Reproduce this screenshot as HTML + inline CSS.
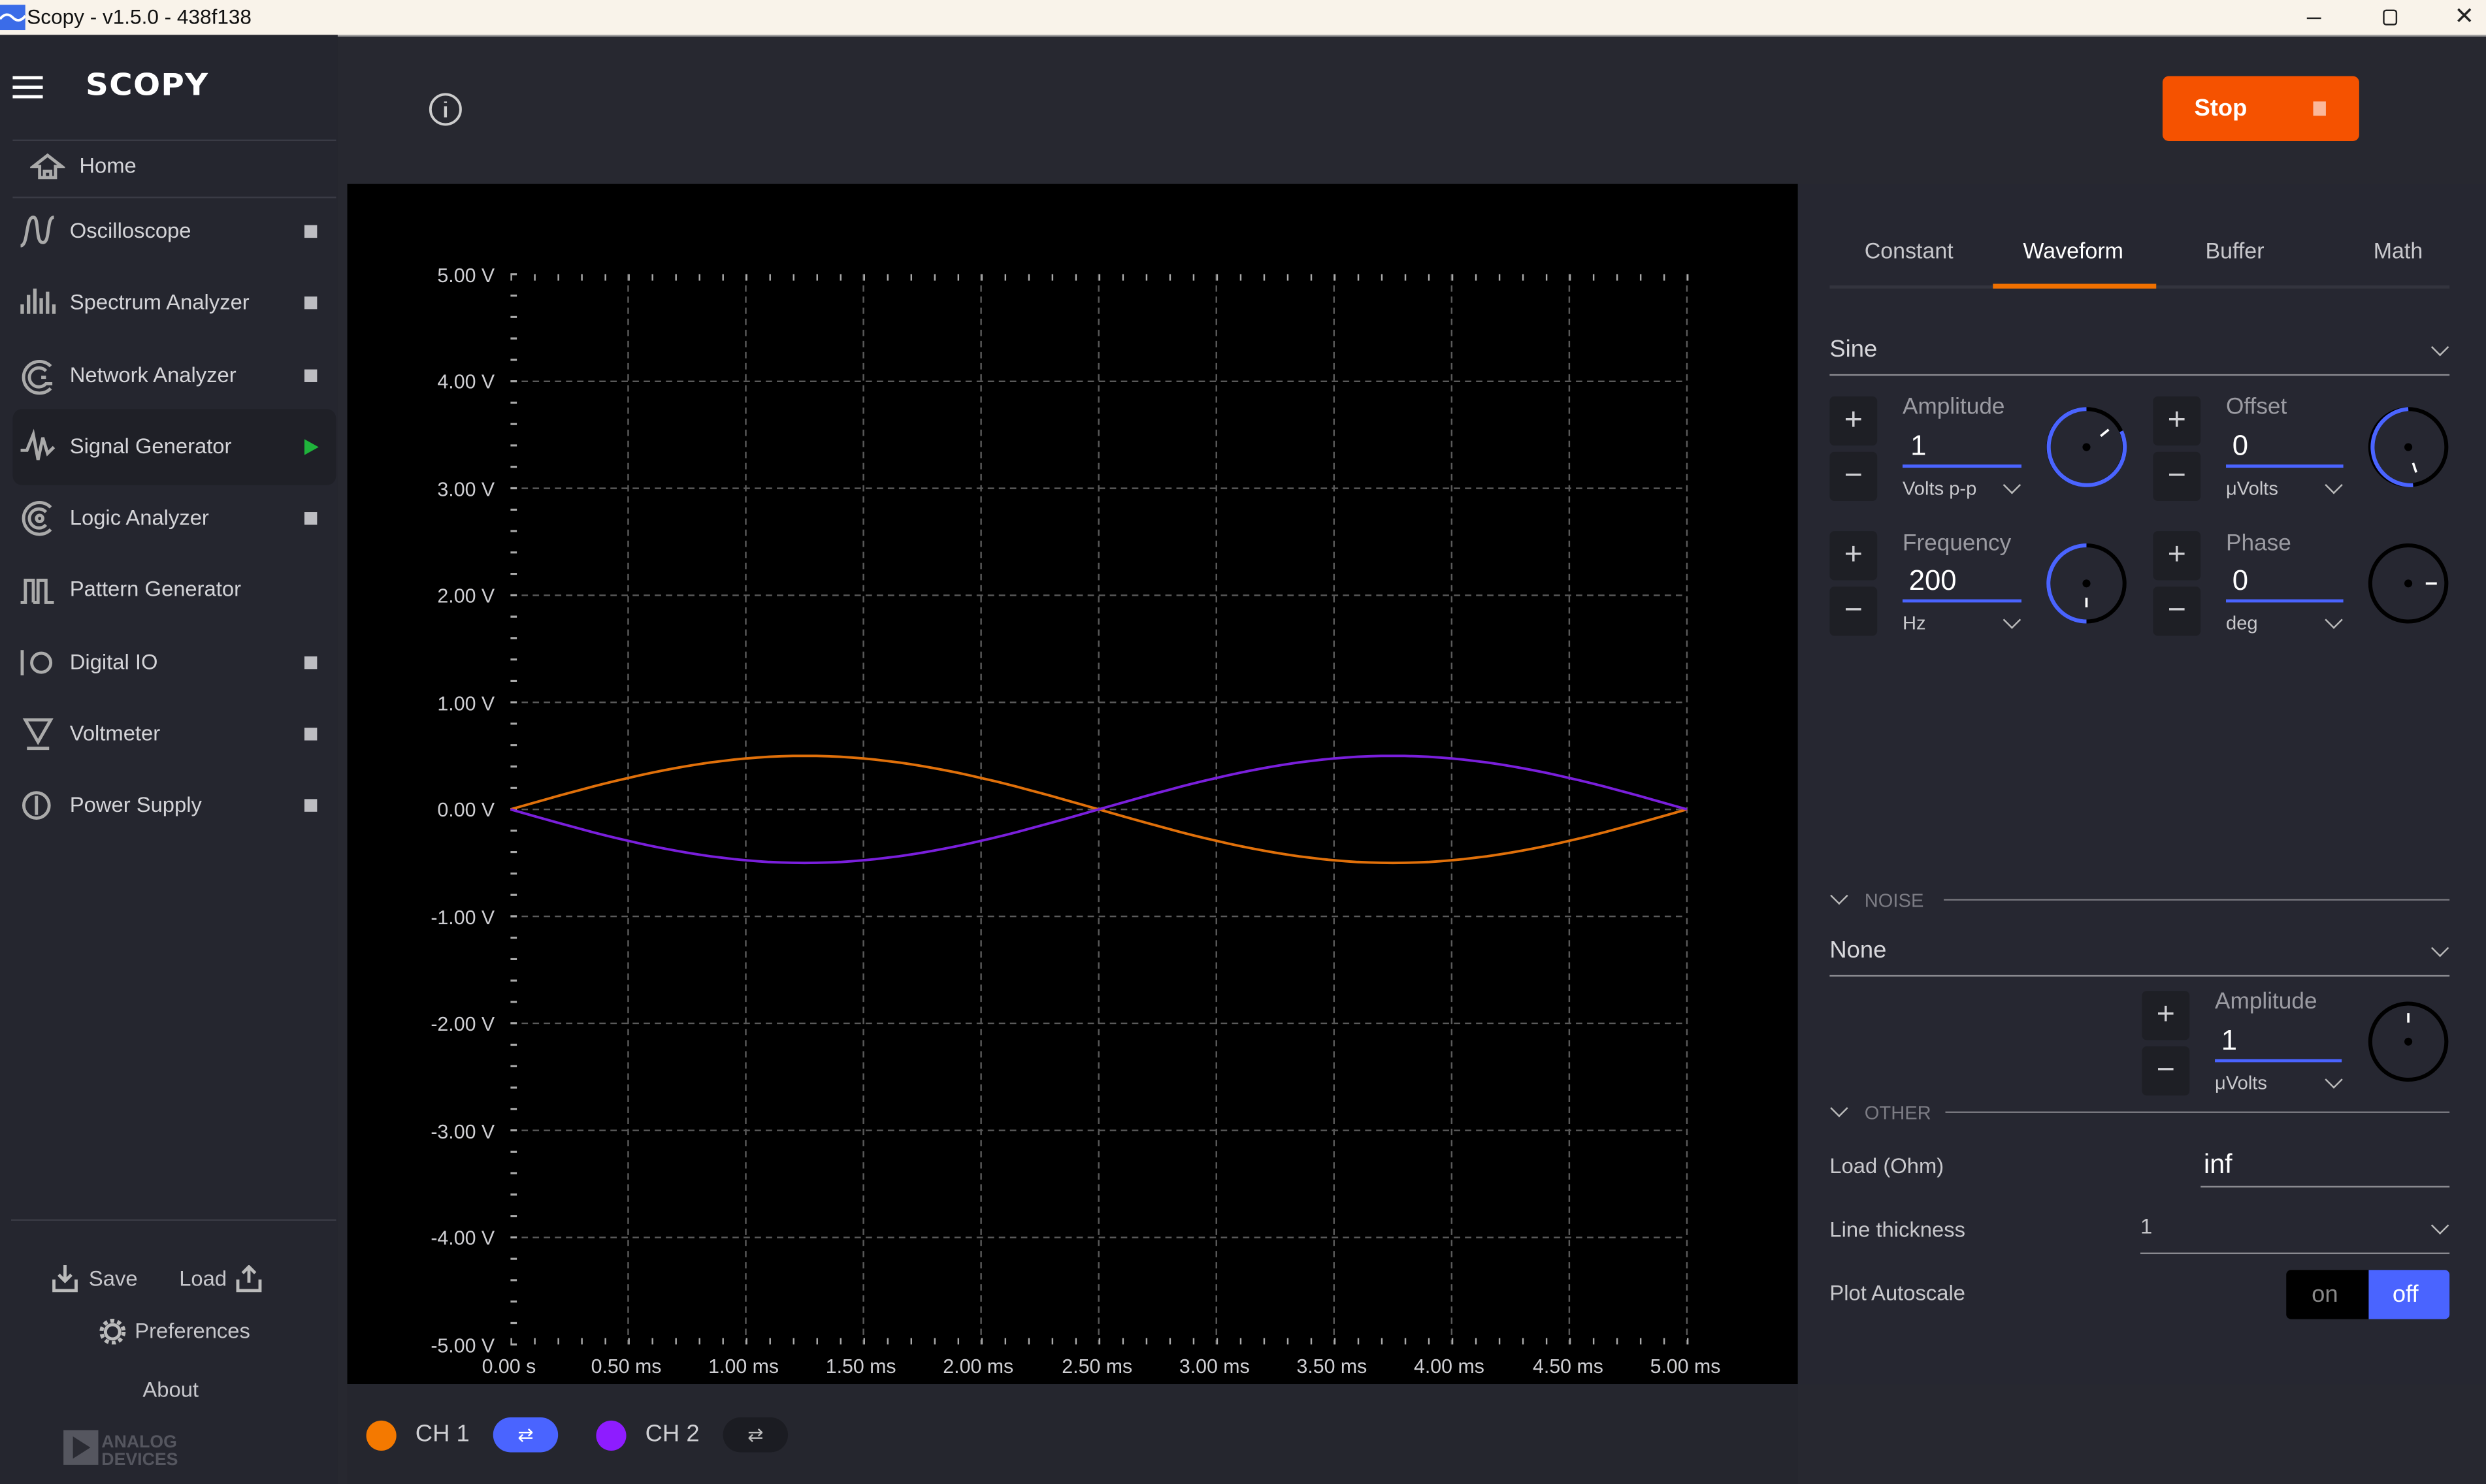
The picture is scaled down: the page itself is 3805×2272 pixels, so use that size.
<!DOCTYPE html>
<html><head><meta charset="utf-8"><style>
html,body{margin:0;padding:0;background:#26272f;overflow:hidden;width:3805px;height:2272px}
#s{position:absolute;left:0;top:0;width:1568px;height:936px;transform:scale(2.42666,2.42735);transform-origin:0 0;font-family:"Liberation Sans","DejaVu Sans",sans-serif;color:#d0d0d4;background:#272830}
.a{position:absolute}
.t{white-space:nowrap}
.side{left:0;top:22px;width:213px;height:914px;background:#25262f}
.item{position:absolute;left:44px;font-size:13.5px;color:#d4d4d8}
.sq{position:absolute;left:192px;width:8px;height:8px;background:#bdbdc2}
.pm{position:absolute;width:30px;height:31px;background:#1e1f25;border-radius:3px;color:#cfcfd3;font-size:20px;text-align:center;line-height:30px}
.lbl{font-size:14.5px;color:#9b9ba2}
.val{font-size:18px;color:#fff}
.uline{height:2px;background:#4a64ff}
.unit{font-size:12px;color:#c8c8cc}
.chev{width:7px;height:7px;border-right:1.3px solid #bbb;border-bottom:1.3px solid #bbb;transform:rotate(45deg)}
</style></head><body><div id="s">
<!-- title bar -->
<div class="a" style="left:0;top:0;width:1568px;height:22px;background:#f9f3ea;border-bottom:1px solid #999"></div>
<svg class="a" style="left:0;top:3px" width="16" height="16"><rect width="16" height="16" fill="#3b6ce8"/><path d="M0 9 Q4 4 8 8 T16 7" stroke="#fff" stroke-width="1.6" fill="none"/></svg>
<div class="a t" style="left:17px;top:3px;font-size:13px;color:#111">Scopy - v1.5.0 - 438f138</div>
<div class="a" style="left:1455px;top:11px;width:9px;height:1px;background:#222"></div>
<div class="a" style="left:1503px;top:6px;width:7px;height:8px;border:1px solid #222;border-radius:2px"></div>
<div class="a t" style="left:1548px;top:1px;font-size:15px;color:#222">✕</div>

<!-- sidebar -->
<div class="a side"></div>
<div class="a" style="left:8px;top:48px;width:19px;height:2px;background:#fff;box-shadow:0 6px 0 #fff,0 12px 0 #fff"></div>
<div class="a t" style="left:54px;top:43px;font-size:19px;font-weight:bold;color:#fff;letter-spacing:0.5px;transform:scaleX(1.05);transform-origin:0 0;font-family:'DejaVu Sans',sans-serif">SCOPY</div>
<div class="a" style="left:8px;top:88px;width:204px;height:1px;background:#3a3b45"></div>
<div class="a" style="left:8px;top:124px;width:204px;height:1px;background:#3a3b45"></div>
<svg class="a" style="left:19px;top:96px" width="22" height="18"><path d="M2 9 L11 2 L20 9 H16 V16 H6 V9 Z M9 16 V12 H13 V16" stroke="#aaa" stroke-width="2" fill="none"/></svg>
<div class="item t" style="left:50px;top:97px">Home</div>
<div class="a" style="left:8px;top:258px;width:204px;height:48px;background:#1f2027;border-radius:6px"></div>
<svg class="a" style="left:12px;top:134px" width="24" height="400" fill="none" stroke="#aaa" stroke-width="2">
<path d="M1 21 C6 21 4 3 9 3 C13 3 10 19 15 19 C20 19 17 3 22 3"/>
<path d="M2 64 V58 M6 64 V52 M10 64 V48 M14 64 V54 M18 64 V50 M22 64 V58" stroke-width="2.2"/>
<path d="M20 97 A10 10 0 1 0 20 111 M17 100 A6 6 0 1 0 17 108 H21 M14 104 H17"/>
<path d="M1 150 L5 150 L9 140 L12 156 L15 142 L18 152 L22 148"/>
<path d="M20 186 A10 10 0 1 0 20 200 M17 189 A6 6 0 1 0 17 197 M11 193 a2 2 0 1 0 4 0 a2 2 0 1 0 -4 0"/>
<path d="M1 246 H4 V232 H9 V246 M9 246 H12 V232 H17 V246 H22"/>
<path d="M2 276 V292 M14 284 m-6 0 a6 6 0 1 0 12 0 a6 6 0 1 0 -12 0"/>
<path d="M4 320 H20 L12 334 Z M5 338 H19"/>
<path d="M11 374 m-8 0 a8 8 0 1 0 16 0 a8 8 0 1 0 -16 0 M11 368 V380"/>
</svg>
<div class="item t" style="top:138px">Oscilloscope</div><div class="sq" style="top:142px"></div>
<div class="item t" style="top:183px">Spectrum Analyzer</div><div class="sq" style="top:187px"></div>
<div class="item t" style="top:229px">Network Analyzer</div><div class="sq" style="top:233px"></div>
<div class="item t" style="top:274px">Signal Generator</div>
<div class="a" style="left:192px;top:277px;width:0;height:0;border-left:9px solid #1fb33b;border-top:5px solid transparent;border-bottom:5px solid transparent"></div>
<div class="item t" style="top:319px">Logic Analyzer</div><div class="sq" style="top:323px"></div>
<div class="item t" style="top:364px">Pattern Generator</div>
<div class="item t" style="top:410px">Digital IO</div><div class="sq" style="top:414px"></div>
<div class="item t" style="top:455px">Voltmeter</div><div class="sq" style="top:459px"></div>
<div class="item t" style="top:500px">Power Supply</div><div class="sq" style="top:504px"></div>
<div class="a" style="left:7px;top:769px;width:205px;height:1px;background:#3a3b45"></div>
<svg class="a" style="left:33px;top:798px" width="140" height="50" fill="none" stroke="#bbb" stroke-width="2"><path d="M1 9 V16 H15 V9 M8 0 V10 M4 6 L8 10 L12 6"/><path d="M117 9 V16 H131 V9 M124 11 V1 M120 5 L124 1 L128 5"/>
<circle cx="38" cy="42" r="4.5"/><circle cx="38" cy="42" r="7" stroke-dasharray="2.5 2" stroke-width="2.5"/></svg>
<div class="a t" style="left:56px;top:799px;font-size:13.5px;color:#c6c6cb">Save</div>
<div class="a t" style="left:113px;top:799px;font-size:13.5px;color:#c6c6cb">Load</div>
<div class="a t" style="left:85px;top:832px;font-size:13.5px;color:#c6c6cb">Preferences</div>
<div class="a t" style="left:90px;top:869px;font-size:13.5px;color:#c6c6cb">About</div>
<svg class="a" style="left:40px;top:902px" width="90" height="24"><rect x="0" y="0" width="22" height="22" fill="#55565f"/><path d="M6 4 L17 11 L6 18 Z" fill="#2a2b33"/><text x="24" y="11" font-size="11" font-weight="bold" fill="#55565f" font-family="Liberation Sans Narrow,Liberation Sans,sans-serif">ANALOG</text><text x="24" y="22" font-size="11" font-weight="bold" fill="#55565f" font-family="Liberation Sans Narrow,Liberation Sans,sans-serif">DEVICES</text></svg>

<!-- top bar -->
<svg class="a" style="left:269px;top:57px" width="24" height="24"><circle cx="12" cy="12" r="9.5" stroke="#ccc" stroke-width="1.6" fill="none"/><path d="M12 10 V17 M12 7 V8" stroke="#ccc" stroke-width="1.8"/></svg>
<div class="a" style="left:1364px;top:48px;width:124px;height:41px;background:#f55200;border-radius:4px"></div>
<div class="a t" style="left:1384px;top:60px;font-size:15px;font-weight:bold;color:#fff">Stop</div>
<div class="a" style="left:1459px;top:64px;width:8px;height:9px;background:#fbb89a"></div>

<!-- plot -->
<svg class="a" style="left:219px;top:116px" width="915" height="757" viewBox="219 116 915 757">
<rect x="219" y="116" width="915" height="757" fill="#000"/>
<g stroke="#5a5a5a" stroke-width="1" stroke-dasharray="4 3">
<path d="M396.2 173V848M470.4 173V848M544.6 173V848M618.8 173V848M693 173V848M767.2 173V848M841.4 173V848M915.6 173V848M989.8 173V848M1064 173V848"/>
<path d="M322 240.5H1064M322 308H1064M322 375.5H1064M322 443H1064M322 510.5H1064M322 578H1064M322 645.5H1064M322 713H1064M322 780.5H1064"/>
</g>
<g stroke="#aaa">
<line x1="324" y1="172.3" x2="324" y2="849" stroke-width="4" stroke-dasharray="1.3 12.2"/>
<line x1="322" y1="175" x2="1066" y2="175" stroke-width="4" stroke-dasharray="1 13.84"/>
<line x1="322" y1="846" x2="1066" y2="846" stroke-width="4" stroke-dasharray="1 13.84"/>
</g>
<polyline fill="none" stroke="#e0700a" stroke-width="1.6" points="PTS1"/>
<polyline fill="none" stroke="#7a1fdc" stroke-width="1.6" points="PTS2"/>
<g fill="#cfcfd3" font-size="12.5" text-anchor="end" font-family="Liberation Sans Narrow,Liberation Sans,sans-serif">
<text x="312" y="178">5.00 V</text><text x="312" y="245">4.00 V</text><text x="312" y="313">3.00 V</text><text x="312" y="380">2.00 V</text><text x="312" y="448">1.00 V</text><text x="312" y="515">0.00 V</text><text x="312" y="583">-1.00 V</text><text x="312" y="650">-2.00 V</text><text x="312" y="718">-3.00 V</text><text x="312" y="785">-4.00 V</text><text x="312" y="853">-5.00 V</text>
</g>
<g fill="#cfcfd3" font-size="12.5" text-anchor="middle" font-family="Liberation Sans Narrow,Liberation Sans,sans-serif">
<text x="321" y="866">0.00 s</text><text x="395" y="866">0.50 ms</text><text x="469" y="866">1.00 ms</text><text x="543" y="866">1.50 ms</text><text x="617" y="866">2.00 ms</text><text x="692" y="866">2.50 ms</text><text x="766" y="866">3.00 ms</text><text x="840" y="866">3.50 ms</text><text x="914" y="866">4.00 ms</text><text x="989" y="866">4.50 ms</text><text x="1063" y="866">5.00 ms</text>
</g>
</svg>

<!-- bottom bar -->
<div class="a" style="left:219px;top:873px;width:915px;height:63px;background:#25262e"></div>
<div class="a" style="left:231px;top:896px;width:19px;height:19px;border-radius:50%;background:#f47900"></div>
<div class="a t" style="left:262px;top:896px;font-size:15px;color:#cfcfd3">CH 1</div>
<div class="a" style="left:311px;top:894px;width:41px;height:22px;border-radius:11px;background:#4a64ff;color:#fff;font-size:12px;text-align:center;line-height:22px">⇄</div>
<div class="a" style="left:376px;top:896px;width:19px;height:19px;border-radius:50%;background:#8e1cff"></div>
<div class="a t" style="left:407px;top:896px;font-size:15px;color:#cfcfd3">CH 2</div>
<div class="a" style="left:456px;top:894px;width:41px;height:22px;border-radius:11px;background:#1b1c22;color:#bbb;font-size:12px;text-align:center;line-height:22px">⇄</div>

<!-- right panel -->
<div class="a" style="left:1134px;top:116px;width:434px;height:757px;background:#262731"></div>
<div class="a t" style="left:1176px;top:150px;font-size:14px;color:#c8c8cc">Constant</div>
<div class="a t" style="left:1276px;top:150px;font-size:14px;color:#fff">Waveform</div>
<div class="a t" style="left:1391px;top:150px;font-size:14px;color:#c8c8cc">Buffer</div>
<div class="a t" style="left:1497px;top:150px;font-size:14px;color:#c8c8cc">Math</div>
<div class="a" style="left:1154px;top:180px;width:391px;height:2px;background:#33343e"></div>
<div class="a" style="left:1257px;top:179px;width:103px;height:3px;background:#f07000"></div>
<div class="a t" style="left:1154px;top:212px;font-size:15px;color:#d8d8dc">Sine</div>
<div class="a chev" style="left:1535px;top:215px"></div>
<div class="a" style="left:1154px;top:236px;width:391px;height:1px;background:#8a8a90"></div>

<!-- controls -->
<div class="pm" style="left:1154px;top:250px">+</div><div class="pm" style="left:1154px;top:285px">−</div>
<div class="pm" style="left:1358px;top:250px">+</div><div class="pm" style="left:1358px;top:285px">−</div>
<div class="pm" style="left:1154px;top:335px">+</div><div class="pm" style="left:1154px;top:370px">−</div>
<div class="pm" style="left:1358px;top:335px">+</div><div class="pm" style="left:1358px;top:370px">−</div>
<div class="pm" style="left:1351px;top:625px">+</div><div class="pm" style="left:1351px;top:660px">−</div>

<div class="a t lbl" style="left:1200px;top:249px">Amplitude</div>
<div class="a t val" style="left:1205px;top:271px">1</div>
<div class="a uline" style="left:1200px;top:293px;width:75px"></div>
<div class="a t unit" style="left:1200px;top:301px">Volts p-p</div><div class="a chev" style="left:1265px;top:302px"></div>

<div class="a t lbl" style="left:1404px;top:249px">Offset</div>
<div class="a t val" style="left:1408px;top:271px">0</div>
<div class="a uline" style="left:1404px;top:293px;width:74px"></div>
<div class="a t unit" style="left:1404px;top:301px">μVolts</div><div class="a chev" style="left:1468px;top:302px"></div>

<div class="a t lbl" style="left:1200px;top:335px">Frequency</div>
<div class="a t val" style="left:1204px;top:356px">200</div>
<div class="a uline" style="left:1200px;top:378px;width:75px"></div>
<div class="a t unit" style="left:1200px;top:386px">Hz</div><div class="a chev" style="left:1265px;top:387px"></div>

<div class="a t lbl" style="left:1404px;top:335px">Phase</div>
<div class="a t val" style="left:1408px;top:356px">0</div>
<div class="a uline" style="left:1404px;top:378px;width:74px"></div>
<div class="a t unit" style="left:1404px;top:386px">deg</div><div class="a chev" style="left:1468px;top:387px"></div>

<svg class="a" style="left:1134px;top:116px" width="434" height="757" viewBox="1134 116 434 757" fill="none" stroke-width="2.5">
<circle cx="1316" cy="282" r="24" stroke="#000"/>
<path d="M1316 258 A24 24 0 1 0 1338 272" stroke="#4a64ff"/>
<circle cx="1316" cy="282" r="2.5" fill="#000" stroke="none"/><path d="M1325 275 L1330 271" stroke="#fff" stroke-width="1.5"/>
<circle cx="1519" cy="282" r="24" stroke="#000"/><path d="M1519 258 A24 24 0 0 0 1522 306" stroke="#4a64ff"/>
<circle cx="1519" cy="282" r="2.5" fill="#000" stroke="none"/><path d="M1522 292 L1524 298" stroke="#fff" stroke-width="1.5"/>
<circle cx="1316" cy="368" r="24" stroke="#000"/><path d="M1316 344 A24 24 0 0 0 1316 392" stroke="#4a64ff"/>
<circle cx="1316" cy="368" r="2.5" fill="#000" stroke="none"/><path d="M1316 377 V383" stroke="#fff" stroke-width="1.5"/>
<circle cx="1519" cy="368" r="24" stroke="#000"/>
<circle cx="1519" cy="368" r="2.5" fill="#000" stroke="none"/><path d="M1530 368 H1537" stroke="#fff" stroke-width="1.5"/>
<circle cx="1519" cy="657" r="24" stroke="#000"/>
<circle cx="1519" cy="657" r="2.5" fill="#000" stroke="none"/><path d="M1519 639 V645" stroke="#fff" stroke-width="1.5"/>
</svg>

<div class="a chev" style="left:1156px;top:561px"></div>
<div class="a t" style="left:1176px;top:561px;font-size:12px;color:#7c7c84">NOISE</div>
<div class="a" style="left:1226px;top:567px;width:319px;height:1px;background:#77777e"></div>
<div class="a t" style="left:1154px;top:591px;font-size:15px;color:#d8d8dc">None</div>
<div class="a chev" style="left:1535px;top:594px"></div>
<div class="a" style="left:1154px;top:615px;width:391px;height:1px;background:#8a8a90"></div>

<div class="a t lbl" style="left:1397px;top:624px">Amplitude</div>
<div class="a t val" style="left:1401px;top:646px">1</div>
<div class="a uline" style="left:1397px;top:668px;width:80px"></div>
<div class="a t unit" style="left:1397px;top:676px">μVolts</div><div class="a chev" style="left:1468px;top:677px"></div>

<div class="a chev" style="left:1156px;top:695px"></div>
<div class="a t" style="left:1176px;top:695px;font-size:12px;color:#7c7c84">OTHER</div>
<div class="a" style="left:1227px;top:701px;width:318px;height:1px;background:#77777e"></div>

<div class="a t" style="left:1154px;top:728px;font-size:13.5px;color:#c8c8cc">Load (Ohm)</div>
<div class="a t" style="left:1390px;top:725px;font-size:17px;color:#fff">inf</div>
<div class="a" style="left:1388px;top:748px;width:157px;height:1px;background:#8a8a90"></div>
<div class="a t" style="left:1154px;top:768px;font-size:13.5px;color:#c8c8cc">Line thickness</div>
<div class="a t" style="left:1350px;top:766px;font-size:13.5px;color:#c8c8cc">1</div>
<div class="a chev" style="left:1535px;top:769px"></div>
<div class="a" style="left:1350px;top:790px;width:195px;height:1px;background:#8a8a90"></div>
<div class="a t" style="left:1154px;top:808px;font-size:13.5px;color:#c8c8cc">Plot Autoscale</div>
<div class="a" style="left:1442px;top:801px;width:103px;height:31px;background:#000;border-radius:3px"></div>
<div class="a" style="left:1494px;top:801px;width:51px;height:31px;background:#4a64ff;border-radius:0 3px 3px 0"></div>
<div class="a t" style="left:1458px;top:808px;font-size:15px;color:#888">on</div>
<div class="a t" style="left:1509px;top:808px;font-size:15px;color:#fff">off</div>
</div>
<script>
(function(){var a=[],b=[];for(var i=0;i<=100;i++){var t=i/100;var x=322+742*t;var y=33.75*Math.sin(2*Math.PI*t);a.push(x.toFixed(1)+','+(510.5-y).toFixed(1));b.push(x.toFixed(1)+','+(510.5+y).toFixed(1));}
var p=document.querySelectorAll('polyline');p[0].setAttribute('points',a.join(' '));p[1].setAttribute('points',b.join(' '));})();
</script>
</body></html>
